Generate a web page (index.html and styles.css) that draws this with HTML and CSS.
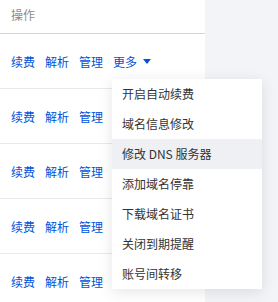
FILE: index.html
```html
<!DOCTYPE html>
<html lang="zh-CN">
<head>
    <meta charset="UTF-8">
    <meta name="viewport" content="width=device-width, initial-scale=1.0">
    <title>域名操作</title>
    <link rel="stylesheet" href="styles.css">
</head>
<body>
    <div class="page">
        <div class="table">
            <div class="table-head">操作</div>
            <div class="row">
                <a class="link">续费</a>
                <a class="link">解析</a>
                <a class="link">管理</a>
                <a class="link more">更多
                    <svg class="caret" width="8" height="5" viewBox="0 0 8 5"><path d="M0 0h8L4 5z" fill="#0052d9"/></svg>
                </a>
            </div>
            <div class="row">
                <a class="link">续费</a>
                <a class="link">解析</a>
                <a class="link">管理</a>
            </div>
            <div class="row">
                <a class="link">续费</a>
                <a class="link">解析</a>
                <a class="link">管理</a>
            </div>
            <div class="row">
                <a class="link">续费</a>
                <a class="link">解析</a>
                <a class="link">管理</a>
            </div>
            <div class="row">
                <a class="link">续费</a>
                <a class="link">解析</a>
                <a class="link">管理</a>
            </div>
        </div>
        <div class="side"></div>

        <ul class="dropdown">
            <li class="item">开启自动续费</li>
            <li class="item">域名信息修改</li>
            <li class="item active">修改 DNS 服务器</li>
            <li class="item">添加域名停靠</li>
            <li class="item">下载域名证书</li>
            <li class="item">关闭到期提醒</li>
            <li class="item">账号间转移</li>
        </ul>
    </div>
</body>
</html>
```

FILE: styles.css
```css
body {
    margin: 0;
    font-family: "Noto Sans CJK SC", "Noto Sans", sans-serif;
    font-size: 12px;
    background-color: #f3f4f7;
    overflow: hidden;
}

.page {
    position: relative;
    display: flex;
    height: 302px;
}

.table {
    width: 205px;
    background-color: #fff;
}

.side {
    flex: 1;
}

.table-head {
    height: 33px;
    line-height: 30px;
    padding-left: 11px;
    color: #8b8b8b;
    border-bottom: 1px solid #d0d5de;
}

.row {
    display: flex;
    align-items: center;
    gap: 10px;
    height: 54px;
    padding-left: 11px;
    border-bottom: 1px solid #e7e9ee;
}

.link {
    color: #0052d9;
    cursor: pointer;
}

.more {
    display: flex;
    align-items: center;
    gap: 6px;
}

.caret {
    display: block;
}

.dropdown {
    position: absolute;
    left: 112px;
    top: 79px;
    width: 150px;
    margin: 0;
    padding: 0;
    list-style: none;
    background-color: #fff;
    box-shadow: 0 3px 14px rgba(0, 0, 0, 0.1);
}

.item {
    height: 30px;
    line-height: 30px;
    padding-left: 10px;
    color: #333;
    cursor: pointer;
}

.item.active {
    background-color: #eef0f4;
}
```
